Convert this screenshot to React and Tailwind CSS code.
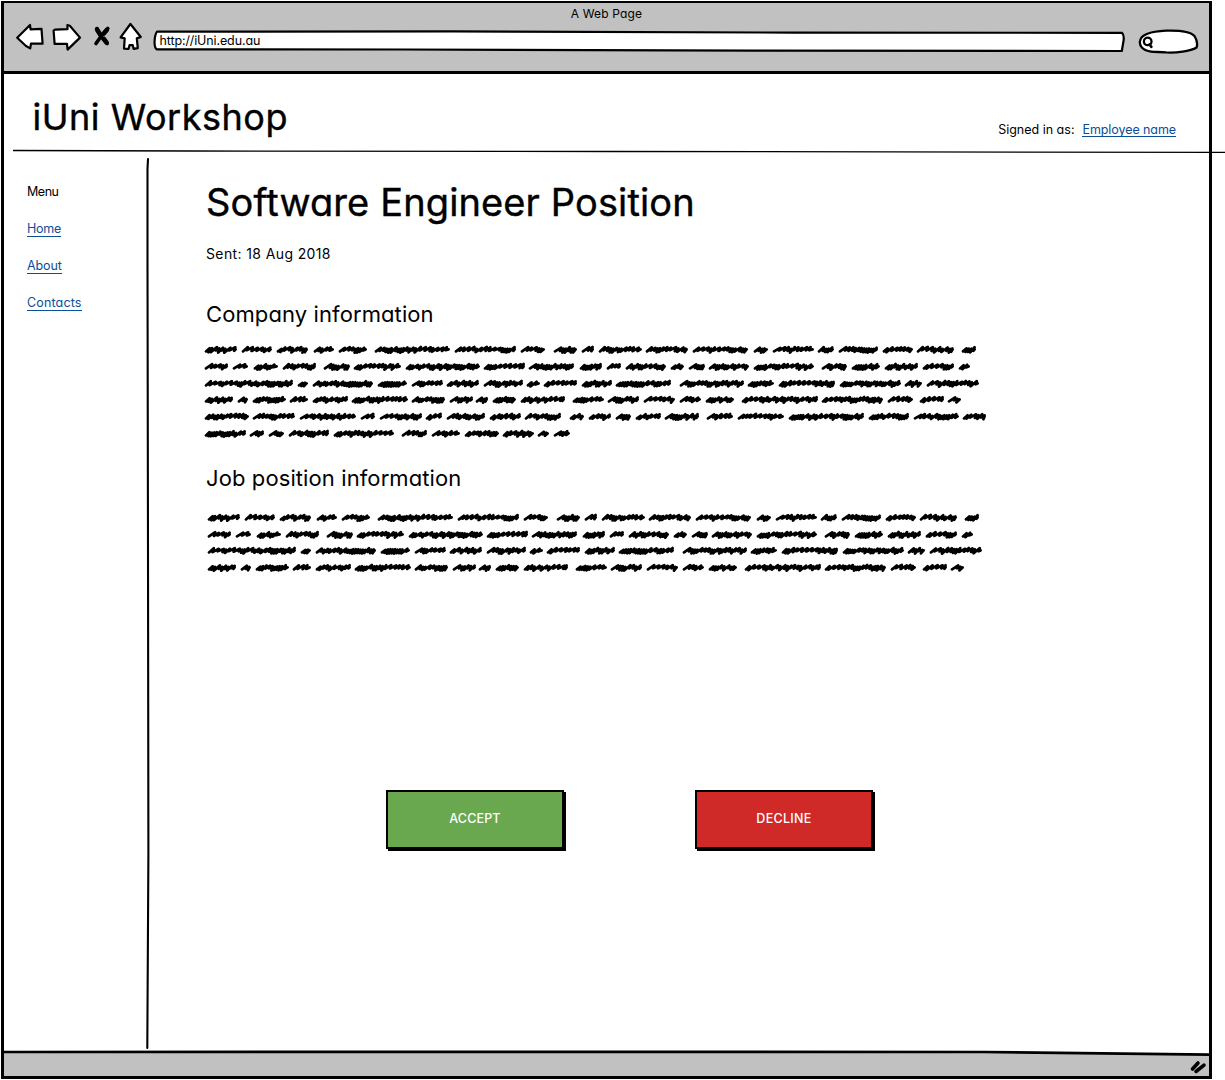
const COMPANY_LINES = [
  [204,236,241,271,276,307,313,333,338,366,374,449,454,515,520,544,553,576,581,593,598,641,645,687,692,747,753,767,772,813,817,833,838,877,882,912,916,953,961,975],
  [204,227,232,247,253,277,282,315,323,349,353,400,405,479,483,524,528,573,579,601,606,620,625,665,670,683,688,704,708,748,753,813,821,846,851,879,884,917,922,953,958,969],
  [204,292,297,307,312,372,377,406,411,442,446,478,483,522,526,539,543,576,581,611,615,670,679,743,747,773,778,834,839,900,904,921,926,978],
  [204,232,237,247,252,285,289,307,312,347,351,407,411,444,449,472,475,487,492,515,520,564,572,603,607,638,643,674,679,700,705,733,741,817,821,882,887,912,919,943,947,960],
  [204,248,252,294,299,355,360,374,379,421,425,441,446,484,489,520,524,560,569,583,588,610,615,630,635,660,664,698,706,732,737,783,788,863,868,908,913,958,962,985],
  [204,245,249,263,268,283,288,328,333,393,401,426,431,459,464,498,502,533,537,548,553,569],
];

// Zigzag pen stroke: each word mixes tight loops with longer, flatter strokes.
function wordPath(start, end, row) {
  const left = start - 203;
  const right = end - 205.4;
  let seed = start * 7919 + row * 104729 + 13;
  const next = () => {
    seed = (seed * 16807) % 2147483647;
    return seed / 2147483647;
  };
  next();
  next();
  let x = left;
  let d = `M${x.toFixed(1)} 8.4`;
  while (x < right - 3.4) {
    const kind = next();
    const step = kind < 0.5 ? 2.4 : kind < 0.75 ? 3.6 : 5;
    const top = Math.min(x + step + 1.2, right);
    d += `L${top.toFixed(1)} ${(kind < 0.5 ? 5 + next() : 4 + next() * 0.9).toFixed(1)}`;
    x += step;
    const bottom = Math.min(x, right - 1.2);
    d += `L${bottom.toFixed(1)} ${(kind < 0.5 ? 8.6 + next() * 1.1 : 7.2 + next() * 0.9).toFixed(1)}`;
  }
  return `${d}L${right.toFixed(1)} 6.4`;
}

function Scribble({ lines, className }) {
  return (
    <div className={className}>
      {lines.map((line, row) => {
        const words = [];
        for (let i = 0; i < line.length; i += 2) words.push(wordPath(line[i], line[i + 1], row));
        return (
          <svg key={row} className="block h-[16.8px] w-[790px] overflow-visible" fill="none" stroke="#000" strokeWidth="2.7" strokeLinecap="round" strokeLinejoin="round">
            <path d={words.join("")} />
          </svg>
        );
      })}
    </div>
  );
}

function NavIcons() {
  const common = { fill: "#fff", stroke: "#000", strokeWidth: 2.2, strokeLinejoin: "round", strokeLinecap: "round" };
  return (
    <div className="flex h-[30px] shrink-0">
      <svg className="ml-[11.5px] h-[30px] w-[29px]" viewBox="0 0 29 30" {...common}>
        <path d="M1.2 15.8L14 3L14.6 7.3L25.5 6.8L26.6 21.6L15 21.6L14.2 26.4L10 24Z" />
      </svg>
      <svg className="ml-[7.5px] h-[30px] w-[30px]" viewBox="0 0 30 30" {...common}>
        <path d="M1.6 8.6L3 7.6L15.5 7.2L15.4 3L17.8 3.8L28 15.6L15.6 27.6L15 21.8L2.6 21.8Z" />
      </svg>
      <svg className="ml-[11px] h-[30px] w-[18px]" viewBox="0 0 18 30" fill="none" stroke="#000" strokeLinecap="round">
        <path d="M4 6.5C5 10 9 17 14.2 21.5M14.8 6.5C10 11 7 16 3 21.5" strokeWidth="3.6" />
        <path d="M4 7.5L7.5 13M11 17L13.6 20.6M13.8 8L10.8 11.5" strokeWidth="4.6" />
      </svg>
      <svg className="ml-[7.5px] h-[30px] w-[24px]" viewBox="0 0 24 30" {...common}>
        <path d="M1.6 15.4L11.4 2L21.8 15L17.8 16.4L18.8 26.2L14.6 26.8L13.8 23.2L10.5 23.2L9.5 27L5 26.6L5.7 16.4Z" />
      </svg>
    </div>
  );
}

function Toolbar() {
  return (
    <div className="h-[71px] shrink-0 border-b-[3px] border-black bg-[#c1c1c1]">
      <div className="h-[19px] text-center text-[12px] leading-[21px] tracking-[0.15px]">A Web Page</div>
      <div className="flex">
        <NavIcons />
        <div className="relative ml-[10px] mt-[7px] h-[23px] w-[974px]">
          <svg className="absolute inset-0 h-full w-full" viewBox="0 0 974 23" fill="#fff" stroke="#000" strokeWidth="2.2" strokeLinejoin="round">
            <path d="M4 2.6L300 2.4L640 3.6L969 3.8Q971.5 6 970.5 12L968.8 22L600 21.6L250 20.5L4 20.4Q1.2 19 1.6 12Q2 5 4 2.6Z" />
          </svg>
          <span className="relative block pl-[7px] text-[12.5px] leading-[23px] tracking-[-0.12px]">http://iUni.edu.au</span>
        </div>
        <svg className="ml-[11px] mt-[4px] h-[30px] w-[62px]" viewBox="0 0 62 30" fill="#fff" stroke="#000" strokeWidth="2.3" strokeLinecap="round">
          <path d="M2 15C3 8 15 5.2 28 4.6C42 4.2 53 6 56.5 10C59 14 59.4 19 58.6 21.5C52 25.5 38 27 28 26.4C22 25.6 18 26.4 13 25.6C5 24.5 1 20 2 15Z" />
          <circle cx="9.7" cy="15.4" r="3.8" strokeWidth="2.3" />
          <path d="M11.4 18.4L13.4 20.8" strokeWidth="2.6" />
        </svg>
      </div>
    </div>
  );
}

function Header() {
  return (
    <header className="flex h-[76px] shrink-0 justify-between pl-[28.5px] pr-[33px]">
      <h1 className="pt-[19.5px] text-[36px] leading-[46px] tracking-[0.53px] [-webkit-text-stroke:0.4px_#000]">iUni Workshop</h1>
      <div className="flex gap-2 pt-[46px] text-[12.5px] leading-[20px]">
        <span>Signed in as:</span>
        <a className="h-[17px] border-b border-[#0b4f96] tracking-[-0.08px] text-[#0b4f96]">Employee name</a>
      </div>
    </header>
  );
}

const LINKS = [
  { label: "Home", spacing: "tracking-[-0.25px]" },
  { label: "About", spacing: "tracking-[-0.1px]" },
  { label: "Contacts", spacing: "tracking-[0.15px]" },
];

function Sidebar() {
  return (
    <nav className="flex w-[142px] shrink-0 flex-col items-start gap-[18px] pl-[23px] pt-[29px] text-[12.5px] leading-[19px]">
      <span className="tracking-[-0.45px]">Menu</span>
      {LINKS.map(({ label, spacing }) => (
        <a key={label} className={`mb-px h-[18px] border-b border-[#0b4f96] leading-[19px] text-[#0b4f96] ${spacing}`}>{label}</a>
      ))}
    </nav>
  );
}

function SketchButton({ label, className }) {
  return (
    <button className={`h-[59px] w-[178px] border-2 border-black text-[12.5px] font-medium text-white shadow-[2px_2px_0_#000] ${className}`}>
      {label}
    </button>
  );
}

export default function App() {
  return (
    <div className="h-[1080px] w-[1225px] overflow-hidden bg-white pl-px pt-px font-['Inter','Lato',sans-serif] text-black [font-feature-settings:'cv11','ss03']">
      <div className="flex h-[1078px] w-[1211px] flex-col border-x-[3px] border-b-[3px] border-t-2 border-black">
        <Toolbar />
        <Header />
        <svg className="ml-[9px] block h-[3px] w-[1212px] shrink-0 overflow-visible" fill="none" stroke="#000" strokeWidth="1.3">
          <path d="M0 .5L180 1L600 1.5L1212 2.4" />
        </svg>
        <div className="flex min-h-0 grow">
          <Sidebar />
          <svg className="h-full w-[4px] shrink-0 overflow-visible" fill="none" stroke="#000" strokeWidth="2.1" strokeLinecap="round">
            <path d="M2 6L1.5 16L1.5 110L2 400L2.4 700L1.3 895" />
          </svg>
          <main className="pl-[52px]">
            <h2 className="ml-1 mt-[25px] whitespace-nowrap text-[38px] leading-[48px] tracking-[0.12px] [-webkit-text-stroke:0.4px_#000]">Software Engineer Position</h2>
            <p className="ml-1 mt-[18px] text-[14px] leading-5 tracking-[0.38px]">Sent: 18 Aug 2018</p>
            <h3 className="ml-1 mt-[35px] text-[22px] leading-[30px] tracking-[0.1px]">Company information</h3>
            <Scribble lines={COMPANY_LINES} className="ml-[2.5px] mt-[14px]" />
            <h3 className="ml-1 mt-[19px] text-[22px] leading-[30px] tracking-[0.1px]">Job position information</h3>
            <Scribble lines={COMPANY_LINES.slice(0, 4)} className="ml-[5.5px] mt-[18px]" />
            <div className="ml-[184px] mt-[212px] flex gap-[131px]">
              <SketchButton label="ACCEPT" className="bg-[#6aa84f] tracking-[0.15px]" />
              <SketchButton label="DECLINE" className="bg-[#cf2a27] tracking-[0.3px]" />
            </div>
          </main>
        </div>
        <footer className="h-[26px] w-full shrink-0">
          <svg className="block h-[26px] w-[1205px]" viewBox="0 0 1205 26">
            <path d="M0 2L700 1.8L980 2L1205 4.6V26H0Z" fill="#c1c1c1" />
            <path d="M0 2L700 1.8L980 2L1205 4.6" fill="none" stroke="#000" strokeWidth="2.7" />
            <path d="M1188.5 19L1194 13M1192 21.5L1200 15.2" fill="none" stroke="#000" strokeWidth="3.6" strokeLinecap="round" />
          </svg>
        </footer>
      </div>
    </div>
  );
}
